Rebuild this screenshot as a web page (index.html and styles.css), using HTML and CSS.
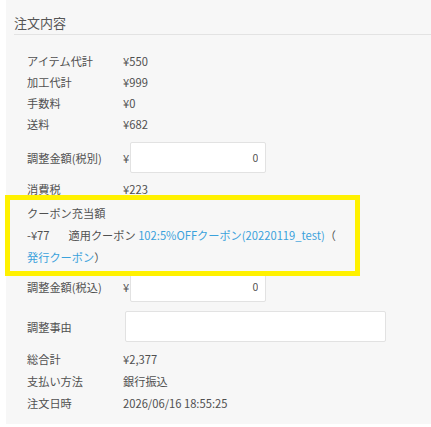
FILE: index.html
```html
<!DOCTYPE html>
<html lang="ja">
<head>
  <meta charset="UTF-8" />
  <meta name="viewport" content="width=device-width, initial-scale=1.0" />
  <title>注文内容</title>
  <link rel="stylesheet" href="styles.css">
</head>
<body>
  <div class="panel">
    <h2 class="panel-title">注文内容</h2>

    <div class="detail">
      <div class="row"><span class="label">アイテム代計</span><span class="value">¥550</span></div>
      <div class="row"><span class="label">加工代計</span><span class="value">¥999</span></div>
      <div class="row"><span class="label">手数料</span><span class="value">¥0</span></div>
      <div class="row"><span class="label">送料</span><span class="value">¥682</span></div>

      <div class="row row-input first-input">
        <span class="label">調整金額(税別)</span>
        <span class="value">¥<input type="text" class="amount" value="0"></span>
      </div>

      <div class="row"><span class="label">消費税</span><span class="value">¥223</span></div>

      <div class="coupon">
        <div class="coupon-line">クーポン充当額</div>
        <div class="coupon-line coupon-detail">
          <span class="coupon-amount">-¥77</span>適用クーポン <a href="#">102:5%OFFクーポン(20220119_test)</a>（<a href="#">発行クーポン</a>）
        </div>
      </div>

      <div class="row row-input second-input">
        <span class="label">調整金額(税込)</span>
        <span class="value">¥<input type="text" class="amount" value="0"></span>
      </div>

      <div class="row row-input reason">
        <span class="label">調整事由</span>
        <span class="value"><input type="text" class="reason-input"></span>
      </div>

      <div class="row row-tall totals"><span class="label">総合計</span><span class="value">¥2,377</span></div>
      <div class="row row-tall"><span class="label">支払い方法</span><span class="value">銀行振込</span></div>
      <div class="row row-tall"><span class="label">注文日時</span><span class="value">2026/06/16 18:55:25</span></div>
    </div>
  </div>
</body>
</html>
```

FILE: styles.css
```css
body {
  margin: 0;
  background: #fff;
  font-family: "Noto Sans CJK JP", "Noto Sans", sans-serif;
  color: #505050;
}
.panel {
  margin-left: 6px;
  background: #f7f7f7;
  padding: 0 0 10px 8px;
}
.panel-title {
  margin: 0;
  padding: 13px 0 2px;
  font-size: 13px;
  font-weight: normal;
  line-height: 19px;
  color: #555;
  border-bottom: 1px solid #e3e3e3;
}
.detail {
  margin-top: 15px;
  padding-left: 13px;
  font-size: 11.2px;
}
.row {
  display: flex;
  align-items: center;
  height: 21px;
}
.label {
  width: 96px;
  flex-shrink: 0;
}
.value {
  display: flex;
  align-items: center;
}
.row-input {
  height: auto;
}
.first-input {
  padding: 8px 0 5px;
}
.second-input {
  margin-top: -5px;
}
.reason {
  padding-top: 9px;
}
.totals {
  margin-top: 6px;
}
.row-tall {
  height: 22px;
}
.amount {
  width: 136px;
  height: 31px;
  box-sizing: border-box;
  margin-left: 1px;
  padding: 0 7px;
  border: 1px solid #e2e2e2;
  border-radius: 2px;
  background: #fff;
  text-align: right;
  font-family: inherit;
  font-size: 10.5px;
  color: #555;
}
.reason-input {
  width: 261px;
  height: 31px;
  box-sizing: border-box;
  margin-left: 2px;
  border: 1px solid #e2e2e2;
  border-radius: 2px;
  background: #fff;
}
.coupon {
  position: relative;
  z-index: 1;
  width: 355px;
  box-sizing: border-box;
  margin: -4px 0 0 -22px;
  padding: 2px 0 3px 17px;
  border: 5px solid #fff100;
  line-height: 22px;
}
.coupon-detail {
  line-break: anywhere;
}
.coupon-amount {
  margin-right: 19px;
}
.coupon a {
  color: #3ba2dc;
  text-decoration: none;
  white-space: nowrap;
}
```
